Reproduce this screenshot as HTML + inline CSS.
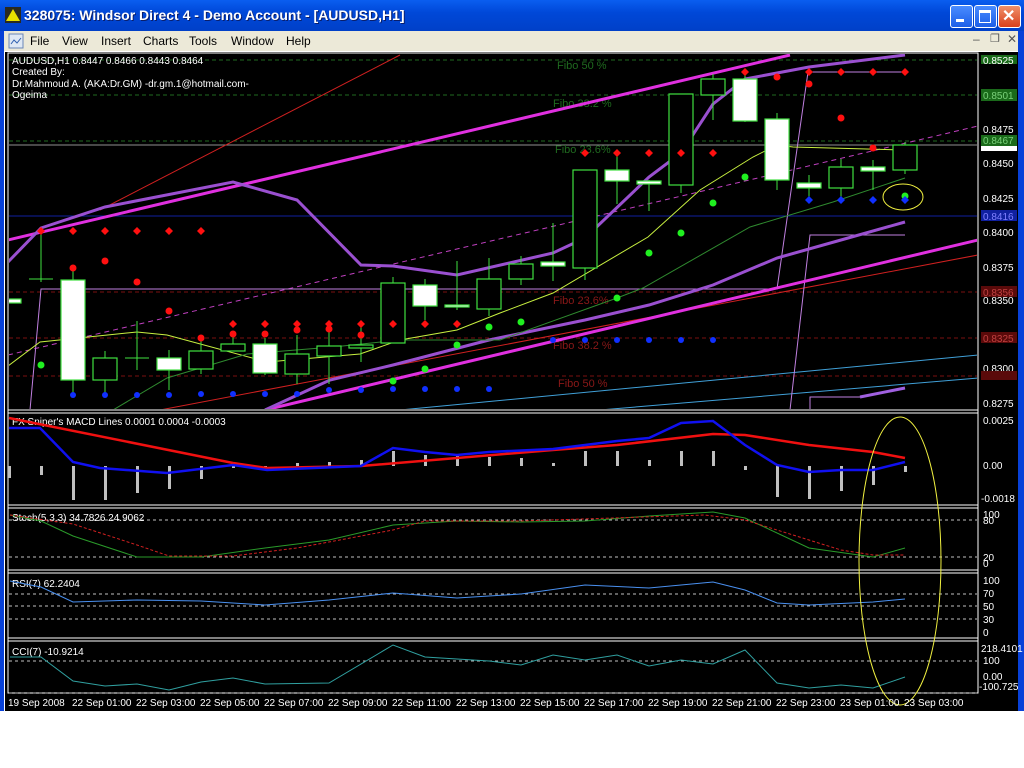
<!DOCTYPE html>
<html><head><meta charset="utf-8"><style>
*{margin:0;padding:0}
body{width:1024px;height:768px;overflow:hidden;background:#fff;font-family:"Liberation Sans",sans-serif;position:relative}
#title{position:absolute;left:0;top:0;width:1024px;height:31px;background:linear-gradient(#0a5ef0,#0048d8 40%,#0040c8);}
#title .t{position:absolute;left:24px;top:7px;color:#fff;font-weight:bold;font-size:14px;text-shadow:1px 1px #0a1e6a}
.wb{position:absolute;top:5px;width:21px;height:21px;border:1px solid #fff;border-radius:3px;background:linear-gradient(#4a8cff,#1c5ee8)}
#menu{position:absolute;left:4px;top:31px;width:1014px;height:20px;background:#ece9d8;font-size:12px}
#menu span{position:absolute;top:3px}
#lb{position:absolute;left:0;top:31px;width:4px;height:680px;background:#0841d8}
#rb{position:absolute;left:1018px;top:31px;width:6px;height:680px;background:#0841d8}
</style></head><body>
<div id="title">
<svg style="position:absolute;left:5px;top:7px" width="16" height="16"><rect width="16" height="16" fill="#2a2a20"/><polygon points="8,2 15,14 1,14" fill="#e8e000"/></svg>
<div class="t">328075: Windsor Direct 4 - Demo Account - [AUDUSD,H1]</div>
<div class="wb" style="left:950px"><div style="position:absolute;left:5px;top:13px;width:8px;height:3px;background:#fff"></div></div>
<div class="wb" style="left:974px"><div style="position:absolute;left:4px;top:4px;width:10px;height:9px;border:1px solid #fff;border-top:3px solid #fff"></div></div>
<div class="wb" style="left:998px;background:linear-gradient(#f0906a,#d8401c)"><div style="position:absolute;left:3px;top:0px;color:#fff;font-weight:bold;font-size:16px">✕</div></div>
</div>
<div id="lb"></div><div id="rb"></div>
<div id="menu">
<svg style="position:absolute;left:4px;top:2px" width="16" height="16"><rect x="1" y="1" width="14" height="14" fill="#dfe8f4" stroke="#6a86b8"/><path d="M3 11 L6 7 L9 10 L13 5" stroke="#3060b0" fill="none"/></svg>
<span style="left:26px">File</span><span style="left:58px">View</span><span style="left:97px">Insert</span><span style="left:139px">Charts</span><span style="left:185px">Tools</span><span style="left:227px">Window</span><span style="left:282px">Help</span>
<span style="left:969px;top:1px;color:#555">–</span><span style="left:986px;top:1px;color:#555;font-size:11px">❐</span><span style="left:1003px;top:1px;color:#555">✕</span>
</div>
<svg style="position:absolute;left:0;top:0" width="1024" height="768" font-family="Liberation Sans, sans-serif" font-size="10">
<rect x="5" y="52" width="1013" height="659" fill="#000"/>
<rect x="8" y="53" width="970" height="640" fill="none" stroke="#fff"/>
<g stroke="#fff" stroke-width="1">
<line x1="8" y1="410" x2="978" y2="410"/><line x1="8" y1="413" x2="978" y2="413"/>
<line x1="8" y1="505" x2="978" y2="505"/><line x1="8" y1="508" x2="978" y2="508"/>
<line x1="8" y1="570" x2="978" y2="570"/><line x1="8" y1="573" x2="978" y2="573"/>
<line x1="8" y1="638" x2="978" y2="638"/><line x1="8" y1="641" x2="978" y2="641"/>
</g>
<defs><clipPath id="m"><rect x="9" y="54" width="968" height="355"/></clipPath></defs>
<g clip-path="url(#m)">
<g stroke-dasharray="4,3" stroke-width="1">
<line x1="9" y1="60" x2="977" y2="60" stroke="#1f6a1f"/><line x1="9" y1="95" x2="977" y2="95" stroke="#1f6a1f"/><line x1="9" y1="141" x2="977" y2="141" stroke="#1f6a1f"/>
<line x1="9" y1="292" x2="977" y2="292" stroke="#7a1010"/><line x1="9" y1="338" x2="977" y2="338" stroke="#7a1010"/><line x1="9" y1="376" x2="977" y2="376" stroke="#7a1010"/>
</g>
<line x1="9" y1="216" x2="977" y2="216" stroke="#1020a0"/>
<line x1="9" y1="145" x2="977" y2="145" stroke="#909090"/>
<g font-size="11">
<text x="557" y="69" fill="#1f6a1f">Fibo 50 %</text><text x="553" y="107" fill="#1f6a1f">Fibo 38.2 %</text><text x="555" y="153" fill="#1f6a1f">Fibo 23.6%</text>
<text x="553" y="304" fill="#8a1818">Fibo 23.6%</text><text x="553" y="349" fill="#8a1818">Fibo 38.2 %</text><text x="558" y="387" fill="#8a1818">Fibo 50 %</text>
</g>
<line x1="100" y1="210" x2="400" y2="55" stroke="#d02020"/>
<line x1="160" y1="410" x2="978" y2="255" stroke="#d02020"/>
<line x1="400" y1="410" x2="978" y2="355" stroke="#40a0d8"/>
<line x1="600" y1="410" x2="978" y2="378" stroke="#40a0d8"/>
<line x1="8" y1="355" x2="978" y2="126" stroke="#c040c0" stroke-dasharray="5,4"/>
<polyline points="30,410 41,289 777,289 808,72 905,72" fill="none" stroke="#c080e0"/>
<polyline points="790,410 810,235 905,235" fill="none" stroke="#c080e0"/>
<polyline points="810,410 810,397 860,397" fill="none" stroke="#c080e0"/>
<line x1="860" y1="397" x2="905" y2="388" stroke="#a060e0" stroke-width="3"/>
<line x1="8" y1="240" x2="790" y2="55" stroke="#e030e0" stroke-width="3"/>
<line x1="265" y1="410" x2="978" y2="240" stroke="#e030e0" stroke-width="3"/>
<polyline points="8,262 41,228 105,207 233,182 297,200 361,265 393,266 457,275 553,253 585,238 649,177 681,153 713,104 745,79 809,67 905,55" fill="none" stroke="#9a50d0" stroke-width="3"/>
<polyline points="265,410 330,380 393,365 489,340 585,320 649,305 713,285 777,258 841,240 905,222" fill="none" stroke="#9a50d0" stroke-width="3"/>
<polyline points="8,366 40,342 137,332 167,335 267,362 360,354 400,340 457,330 500,313 553,293 648,237 700,190 753,157 777,145 793,147 905,150" fill="none" stroke="#c8f040"/>
<polyline points="113,410 167,378 247,354 333,347 400,340 500,340 617,298 643,288 750,227 833,202 905,178" fill="none" stroke="#2f8a2f"/>
<g stroke="#40e040" stroke-width="1">
<line x1="41" y1="232" x2="41" y2="282"/><line x1="29" y1="279" x2="53" y2="279"/>
<line x1="73" y1="270" x2="73" y2="395"/><line x1="105" y1="351" x2="105" y2="395"/>
<line x1="137" y1="321" x2="137" y2="370"/><line x1="125" y1="358" x2="149" y2="358"/>
<line x1="169" y1="350" x2="169" y2="390"/><line x1="201" y1="341" x2="201" y2="374"/>
<line x1="233" y1="333" x2="233" y2="351"/><line x1="265" y1="338" x2="265" y2="375"/>
<line x1="297" y1="335" x2="297" y2="384"/><line x1="329" y1="327" x2="329" y2="384"/>
<line x1="361" y1="327" x2="361" y2="362"/><line x1="393" y1="277" x2="393" y2="343"/>
<line x1="425" y1="279" x2="425" y2="320"/><line x1="457" y1="261" x2="457" y2="310"/>
<line x1="489" y1="258" x2="489" y2="316"/><line x1="521" y1="256" x2="521" y2="285"/>
<line x1="553" y1="223" x2="553" y2="281"/><line x1="585" y1="170" x2="585" y2="280"/>
<line x1="617" y1="153" x2="617" y2="204"/><line x1="649" y1="180" x2="649" y2="211"/>
<line x1="681" y1="94" x2="681" y2="193"/><line x1="713" y1="74" x2="713" y2="120"/>
<line x1="745" y1="74" x2="745" y2="122"/><line x1="777" y1="113" x2="777" y2="190"/>
<line x1="809" y1="175" x2="809" y2="198"/><line x1="841" y1="159" x2="841" y2="198"/>
<line x1="873" y1="160" x2="873" y2="190"/><line x1="905" y1="142" x2="905" y2="174"/>
</g>
<g stroke="#40e040" stroke-width="1.2">
<rect x="0" y="299" width="21" height="4" fill="#fff"/>
<rect x="61" y="280" width="24" height="100" fill="#fff"/>
<rect x="93" y="358" width="24" height="22" fill="#000"/>
<rect x="157" y="358" width="24" height="12" fill="#fff"/>
<rect x="189" y="351" width="24" height="18" fill="#000"/>
<rect x="221" y="344" width="24" height="7" fill="#000"/>
<rect x="253" y="344" width="24" height="29" fill="#fff"/>
<rect x="285" y="354" width="24" height="20" fill="#000"/>
<rect x="317" y="346" width="24" height="10" fill="#000"/>
<rect x="349" y="345" width="24" height="3" fill="#000"/>
<rect x="381" y="283" width="24" height="60" fill="#000"/>
<rect x="413" y="285" width="24" height="21" fill="#fff"/>
<rect x="445" y="305" width="24" height="2" fill="#fff"/>
<rect x="477" y="279" width="24" height="30" fill="#000"/>
<rect x="509" y="264" width="24" height="15" fill="#000"/>
<rect x="541" y="262" width="24" height="4" fill="#fff"/>
<rect x="573" y="170" width="24" height="98" fill="#000"/>
<rect x="605" y="170" width="24" height="11" fill="#fff"/>
<rect x="637" y="181" width="24" height="3" fill="#fff"/>
<rect x="669" y="94" width="24" height="91" fill="#000"/>
<rect x="701" y="79" width="24" height="16" fill="#000"/>
<rect x="733" y="79" width="24" height="42" fill="#fff"/>
<rect x="765" y="119" width="24" height="61" fill="#fff"/>
<rect x="797" y="183" width="24" height="5" fill="#fff"/>
<rect x="829" y="167" width="24" height="21" fill="#000"/>
<rect x="861" y="167" width="24" height="4" fill="#fff"/>
<rect x="893" y="145" width="24" height="25" fill="#000"/>
</g>
<g fill="#ff1010">
<g id="dr"><path d="M0,-4 L4,0 L0,4 L-4,0Z"/></g>
</g>
<g fill="#ff1010">
<path d="M41,227l4,4-4,4-4-4z M73,227l4,4-4,4-4-4z M105,227l4,4-4,4-4-4z M137,227l4,4-4,4-4-4z M169,227l4,4-4,4-4-4z M201,227l4,4-4,4-4-4z"/>
<path d="M233,320l4,4-4,4-4-4z M265,320l4,4-4,4-4-4z M297,320l4,4-4,4-4-4z M329,320l4,4-4,4-4-4z M361,320l4,4-4,4-4-4z M393,320l4,4-4,4-4-4z M425,320l4,4-4,4-4-4z M457,320l4,4-4,4-4-4z"/>
<path d="M585,149l4,4-4,4-4-4z M617,149l4,4-4,4-4-4z M649,149l4,4-4,4-4-4z M681,149l4,4-4,4-4-4z M713,149l4,4-4,4-4-4z"/>
<path d="M745,68l4,4-4,4-4-4z M809,68l4,4-4,4-4-4z M841,68l4,4-4,4-4-4z M873,68l4,4-4,4-4-4z M905,68l4,4-4,4-4-4z"/>
<circle cx="73" cy="268" r="3.5"/><circle cx="105" cy="261" r="3.5"/><circle cx="137" cy="282" r="3.5"/><circle cx="169" cy="311" r="3.5"/><circle cx="201" cy="338" r="3.5"/>
<circle cx="233" cy="334" r="3.5"/><circle cx="265" cy="334" r="3.5"/><circle cx="297" cy="330" r="3.5"/><circle cx="329" cy="329" r="3.5"/><circle cx="361" cy="335" r="3.5"/>
<circle cx="777" cy="77" r="3.5"/><circle cx="809" cy="84" r="3.5"/><circle cx="841" cy="118" r="3.5"/><circle cx="873" cy="148" r="3.5"/>
</g>
<g fill="#20f020">
<circle cx="41" cy="365" r="3.5"/><circle cx="393" cy="381" r="3.5"/><circle cx="425" cy="369" r="3.5"/><circle cx="457" cy="345" r="3.5"/><circle cx="489" cy="327" r="3.5"/><circle cx="521" cy="322" r="3.5"/>
<circle cx="617" cy="298" r="3.5"/><circle cx="649" cy="253" r="3.5"/><circle cx="681" cy="233" r="3.5"/><circle cx="713" cy="203" r="3.5"/><circle cx="745" cy="177" r="3.5"/><circle cx="905" cy="196" r="3.5"/>
</g>
<g fill="#1030ff">
<circle cx="73" cy="395" r="3"/><circle cx="105" cy="395" r="3"/><circle cx="137" cy="395" r="3"/><circle cx="169" cy="395" r="3"/><circle cx="201" cy="394" r="3"/><circle cx="233" cy="394" r="3"/><circle cx="265" cy="394" r="3"/><circle cx="297" cy="394" r="3"/><circle cx="329" cy="390" r="3"/><circle cx="361" cy="390" r="3"/><circle cx="393" cy="389" r="3"/><circle cx="425" cy="389" r="3"/><circle cx="457" cy="389" r="3"/><circle cx="489" cy="389" r="3"/>
<circle cx="553" cy="340" r="3"/><circle cx="585" cy="340" r="3"/><circle cx="617" cy="340" r="3"/><circle cx="649" cy="340" r="3"/><circle cx="681" cy="340" r="3"/><circle cx="713" cy="340" r="3"/>
<path d="M809,196l4,4-4,4-4-4z M841,196l4,4-4,4-4-4z M873,196l4,4-4,4-4-4z M905,196l4,4-4,4-4-4z"/>
</g>
<ellipse cx="903" cy="197" rx="20" ry="13" fill="none" stroke="#f0f040"/>
</g>
<g fill="#fff" font-size="10">
<text x="12" y="64">AUDUSD,H1  0.8447 0.8466 0.8443 0.8464</text>
<text x="12" y="75">Created By:</text>
<text x="12" y="87">Dr.Mahmoud A. (AKA:Dr.GM) -dr.gm.1@hotmail.com-</text>
<text x="12" y="98">Ogeima</text>
</g>
<!-- right axis -->
<g fill="#fff" font-size="10">
<rect x="981" y="55" width="36" height="9" fill="#1a6a1a"/><text x="983" y="64">0.8525</text>
<rect x="981" y="89" width="36" height="12" fill="#1a6a1a"/><text x="983" y="99" fill="#7ad07a">0.8501</text>
<text x="983" y="133">0.8475</text>
<rect x="981" y="135" width="36" height="11" fill="#1a6a1a"/><text x="983" y="144" fill="#7ad07a">0.8467</text>
<rect x="981" y="146" width="36" height="5" fill="#fff"/>
<text x="983" y="167">0.8450</text><text x="983" y="202">0.8425</text>
<rect x="981" y="210" width="36" height="11" fill="#1020a0"/><text x="983" y="220" fill="#8080ff">0.8416</text>
<text x="983" y="236">0.8400</text><text x="983" y="271">0.8375</text>
<rect x="981" y="286" width="36" height="11" fill="#5a0a0a"/><text x="983" y="296" fill="#c04040">0.8356</text>
<text x="983" y="304">0.8350</text>
<rect x="981" y="332" width="36" height="11" fill="#5a0a0a"/><text x="983" y="342" fill="#c04040">0.8325</text>
<text x="983" y="372">0.8300</text>
<rect x="981" y="371" width="36" height="9" fill="#5a0a0a"/>
<text x="983" y="407">0.8275</text>
<text x="983" y="424">0.0025</text><text x="983" y="469">0.00</text><text x="981" y="502">-0.0018</text>
<text x="983" y="518">100</text><text x="983" y="524">80</text><text x="983" y="561">20</text><text x="983" y="567">0</text>
<text x="983" y="584">100</text><text x="983" y="597">70</text><text x="983" y="610">50</text><text x="983" y="623">30</text><text x="983" y="636">0</text>
<text x="981" y="652">218.4101</text><text x="983" y="664">100</text><text x="983" y="680">0.00</text><text x="979" y="690">-100.725</text>
</g>
<!-- MACD -->
<text x="12" y="425" fill="#fff">FX Sniper's MACD Lines 0.0001 0.0004 -0.0003</text>
<g fill="#c0c0c0">
<rect x="8" y="466" width="3" height="12"/><rect x="40" y="466" width="3" height="9"/><rect x="72" y="466" width="3" height="34"/><rect x="104" y="466" width="3" height="34"/><rect x="136" y="466" width="3" height="27"/><rect x="168" y="466" width="3" height="23"/><rect x="200" y="466" width="3" height="13"/><rect x="232" y="463" width="3" height="5"/><rect x="264" y="466" width="3" height="3"/><rect x="296" y="463" width="3" height="3"/><rect x="328" y="462" width="3" height="4"/><rect x="360" y="460" width="3" height="6"/><rect x="392" y="451" width="3" height="15"/><rect x="424" y="455" width="3" height="11"/><rect x="456" y="456" width="3" height="10"/><rect x="488" y="457" width="3" height="9"/><rect x="520" y="458" width="3" height="8"/><rect x="552" y="463" width="3" height="3"/><rect x="584" y="451" width="3" height="15"/><rect x="616" y="451" width="3" height="15"/><rect x="648" y="460" width="3" height="6"/><rect x="680" y="451" width="3" height="15"/><rect x="712" y="451" width="3" height="15"/><rect x="744" y="466" width="3" height="4"/><rect x="776" y="466" width="3" height="31"/><rect x="808" y="466" width="3" height="33"/><rect x="840" y="466" width="3" height="25"/><rect x="872" y="466" width="3" height="19"/><rect x="904" y="466" width="3" height="6"/>
</g>
<polyline points="9,418 233,463 267,468 361,466 457,458 553,450 617,445 713,434 745,435 809,445 873,452 905,458" fill="none" stroke="#f01010" stroke-width="2.5"/>
<polyline points="9,428 40,428 73,462 100,468 167,473 233,465 267,470 361,466 393,448 425,452 457,455 489,452 553,449 585,445 617,441 649,438 681,423 713,421 745,445 777,465 809,472 841,470 873,470 905,462" fill="none" stroke="#1010f0" stroke-width="2.5"/>
<!-- Stoch -->
<g stroke="#c0c0c0" stroke-dasharray="3,3"><line x1="9" y1="520" x2="977" y2="520"/><line x1="9" y1="557" x2="977" y2="557"/>
<line x1="9" y1="594" x2="977" y2="594"/><line x1="9" y1="606" x2="977" y2="606"/><line x1="9" y1="619" x2="977" y2="619"/>
<line x1="9" y1="661" x2="977" y2="661"/><line x1="9" y1="693" x2="977" y2="693"/></g>
<text x="12" y="521" fill="#fff">Stoch(5,3,3) 34.7826 24.9062</text>
<polyline points="10,515 41,521 73,536 137,557 201,557 265,548 329,540 393,525 457,521 521,522 585,521 649,516 713,512 745,518 809,548 873,557 905,548" fill="none" stroke="#2a9a2a"/>
<polyline points="10,515 73,524 137,545 169,556 233,556 297,548 393,530 425,521 521,521 705,515 745,520 777,530 809,540 841,550 873,555 905,555" fill="none" stroke="#d02020" stroke-dasharray="3,2"/>
<!-- RSI -->
<text x="12" y="587" fill="#fff">RSI(7) 62.2404</text>
<polyline points="10,581 41,587 73,602 137,600 201,601 265,605 329,600 393,593 457,598 521,594 585,585 649,588 713,582 745,590 777,603 809,605 873,602 905,599" fill="none" stroke="#4a90f0"/>
<!-- CCI -->
<text x="12" y="655" fill="#fff">CCI(7) -10.9214</text>
<polyline points="10,657 41,657 73,681 105,686 137,684 169,690 201,682 233,678 265,684 329,683 393,645 425,657 489,661 521,665 553,655 585,660 617,655 649,666 681,660 713,664 745,650 777,683 809,688 841,685 873,688 905,677" fill="none" stroke="#30a0a0"/>
<ellipse cx="900" cy="561" rx="41" ry="144" fill="none" stroke="#f0f040"/>
<!-- time axis -->
<g fill="#fff" font-size="10">
<text x="8" y="706">19 Sep 2008</text><text x="72" y="706">22 Sep 01:00</text><text x="136" y="706">22 Sep 03:00</text><text x="200" y="706">22 Sep 05:00</text><text x="264" y="706">22 Sep 07:00</text><text x="328" y="706">22 Sep 09:00</text><text x="392" y="706">22 Sep 11:00</text><text x="456" y="706">22 Sep 13:00</text><text x="520" y="706">22 Sep 15:00</text><text x="584" y="706">22 Sep 17:00</text><text x="648" y="706">22 Sep 19:00</text><text x="712" y="706">22 Sep 21:00</text><text x="776" y="706">22 Sep 23:00</text><text x="840" y="706">23 Sep 01:00</text><text x="904" y="706">23 Sep 03:00</text>
</g>
</svg>
</body></html>
